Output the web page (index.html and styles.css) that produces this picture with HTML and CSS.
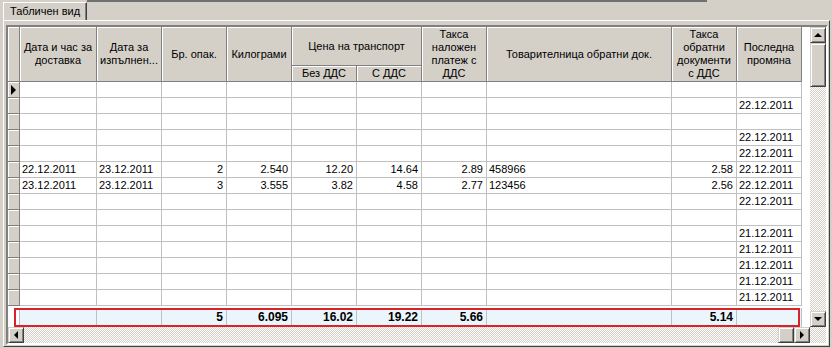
FILE: index.html
```html
<!DOCTYPE html>
<html>
<head>
<meta charset="utf-8">
<link rel="stylesheet" href="styles.css">
</head>
<body>
<div class="tabs">
  <div class="tab">Табличен вид</div>
  <div class="tabline"></div>
</div>
<div class="page">
  <div class="frame">
    <div class="data">
      <div class="grid">
        <div class="h hs2"></div>
        <div class="h hs2">Дата и час за<br>доставка</div>
        <div class="h hs2">Дата за<br>изпълнен...</div>
        <div class="h hs2">Бр. опак.</div>
        <div class="h hs2">Килограми</div>
        <div class="h hc2">Цена на транспорт</div>
        <div class="h hs2">Такса<br>наложен<br>платеж с<br>ДДС</div>
        <div class="h hs2">Товарителница обратни док.</div>
        <div class="h hs2">Такса<br>обратни<br>документи<br>с ДДС</div>
        <div class="h hs2">Последна<br>промяна</div>
        <div class="h">Без ДДС</div>
        <div class="h">С ДДС</div>

        <div class="ind"><span class="arrow"></span></div><div class="c"></div><div class="c"></div><div class="c"></div><div class="c"></div><div class="c"></div><div class="c"></div><div class="c"></div><div class="c"></div><div class="c"></div><div class="c"></div>
        <div class="ind"></div><div class="c"></div><div class="c"></div><div class="c"></div><div class="c"></div><div class="c"></div><div class="c"></div><div class="c"></div><div class="c"></div><div class="c"></div><div class="c">22.12.2011</div>
        <div class="ind"></div><div class="c"></div><div class="c"></div><div class="c"></div><div class="c"></div><div class="c"></div><div class="c"></div><div class="c"></div><div class="c"></div><div class="c"></div><div class="c"></div>
        <div class="ind"></div><div class="c"></div><div class="c"></div><div class="c"></div><div class="c"></div><div class="c"></div><div class="c"></div><div class="c"></div><div class="c"></div><div class="c"></div><div class="c">22.12.2011</div>
        <div class="ind"></div><div class="c"></div><div class="c"></div><div class="c"></div><div class="c"></div><div class="c"></div><div class="c"></div><div class="c"></div><div class="c"></div><div class="c"></div><div class="c">22.12.2011</div>
        <div class="ind"></div><div class="c">22.12.2011</div><div class="c">23.12.2011</div><div class="c r">2</div><div class="c r">2.540</div><div class="c r">12.20</div><div class="c r">14.64</div><div class="c r">2.89</div><div class="c">458966</div><div class="c r">2.58</div><div class="c">22.12.2011</div>
        <div class="ind"></div><div class="c">23.12.2011</div><div class="c">23.12.2011</div><div class="c r">3</div><div class="c r">3.555</div><div class="c r">3.82</div><div class="c r">4.58</div><div class="c r">2.77</div><div class="c">123456</div><div class="c r">2.56</div><div class="c">22.12.2011</div>
        <div class="ind"></div><div class="c"></div><div class="c"></div><div class="c"></div><div class="c"></div><div class="c"></div><div class="c"></div><div class="c"></div><div class="c"></div><div class="c"></div><div class="c">22.12.2011</div>
        <div class="ind"></div><div class="c"></div><div class="c"></div><div class="c"></div><div class="c"></div><div class="c"></div><div class="c"></div><div class="c"></div><div class="c"></div><div class="c"></div><div class="c"></div>
        <div class="ind"></div><div class="c"></div><div class="c"></div><div class="c"></div><div class="c"></div><div class="c"></div><div class="c"></div><div class="c"></div><div class="c"></div><div class="c"></div><div class="c">21.12.2011</div>
        <div class="ind"></div><div class="c"></div><div class="c"></div><div class="c"></div><div class="c"></div><div class="c"></div><div class="c"></div><div class="c"></div><div class="c"></div><div class="c"></div><div class="c">21.12.2011</div>
        <div class="ind"></div><div class="c"></div><div class="c"></div><div class="c"></div><div class="c"></div><div class="c"></div><div class="c"></div><div class="c"></div><div class="c"></div><div class="c"></div><div class="c">21.12.2011</div>
        <div class="ind"></div><div class="c"></div><div class="c"></div><div class="c"></div><div class="c"></div><div class="c"></div><div class="c"></div><div class="c"></div><div class="c"></div><div class="c"></div><div class="c">21.12.2011</div>
        <div class="ind"></div><div class="c"></div><div class="c"></div><div class="c"></div><div class="c"></div><div class="c"></div><div class="c"></div><div class="c"></div><div class="c"></div><div class="c"></div><div class="c">21.12.2011</div>

        <div class="f f0"></div><div class="f"></div><div class="f"></div><div class="f r">5</div><div class="f r">6.095</div><div class="f r">16.02</div><div class="f r">19.22</div><div class="f r">5.66</div><div class="f"></div><div class="f r">5.14</div><div class="f"></div>
      </div>
      <div class="highlight"></div>
    </div>
    <div class="vscroll">
      <div class="btn"><span class="tri up"></span></div>
      <div class="btn thumb-v"></div>
      <div class="track"></div>
      <div class="btn"><span class="tri down"></span></div>
    </div>
    <div class="hscroll">
      <div class="btn"><span class="tri left"></span></div>
      <div class="track"></div>
      <div class="btn"></div>
      <div class="btn"><span class="tri right"></span></div>
    </div>
    <div class="corner"></div>
  </div>
</div>
</body>
</html>
```
FILE: styles.css
```css
html, body {
  margin: 0;
  padding: 0;
}
body {
  width: 832px;
  height: 348px;
  overflow: hidden;
  background: #d4d0c8;
  font-family: "Liberation Sans", Arial, sans-serif;
  font-size: 11px;
  color: #000;
}
.tabs {
  display: flex;
  align-items: flex-start;
  height: 20px;
}
.tab {
  margin-left: 3px;
  margin-top: 2px;
  width: 84px;
  height: 18px;
  box-sizing: border-box;
  border-top: 1px solid #fff;
  border-left: 1px solid #fff;
  border-right: 1px solid #404040;
  box-shadow: inset -1px 0 #808080;
  padding-left: 6px;
  line-height: 17px;
  white-space: nowrap;
}
.tabline {
  width: 620px;
  height: 2px;
  background: #707070;
}
.page {
  margin-left: 3px;
  width: 827px;
  height: 327px;
  box-sizing: border-box;
  border-top: 1px solid #fff;
  border-left: 1px solid #fff;
  border-right: 1px solid #404040;
  border-bottom: 1px solid #404040;
  padding: 4px 0 0 2px;
}
.frame {
  width: 822px;
  height: 320px;
  box-sizing: border-box;
  border-style: solid;
  border-width: 2px;
  border-color: #808080 #fff #fff #808080;
  box-shadow: inset 1px 1px #404040;
  display: grid;
  grid-template-columns: 802px 16px;
  grid-template-rows: 300px 16px;
}
.data {
  position: relative;
  background: #fff;
  overflow: hidden;
}
.grid {
  display: grid;
  grid-template-columns: 12px 77px 65px 65px 65px 65px 65px 65px 185px 65px 65px;
  grid-template-rows: 39px 16px repeat(14, 16px) 21px;
}
.h {
  background: #d4d0c8;
  border-right: 1px solid #808080;
  border-bottom: 1px solid #808080;
  box-shadow: inset 1px 1px #fff;
  box-sizing: border-box;
  display: flex;
  align-items: center;
  justify-content: center;
  text-align: center;
  line-height: 13px;
  white-space: nowrap;
  overflow: hidden;
}
.hs2 { grid-row: span 2; }
.hc2 { grid-column: span 2; }
.ind {
  background: #d4d0c8;
  border-right: 1px solid #808080;
  border-bottom: 1px solid #808080;
  box-shadow: inset 1px 1px #fff;
  box-sizing: border-box;
  display: flex;
  align-items: center;
  padding-left: 3px;
}
.arrow {
  width: 0;
  height: 0;
  border-left: 5px solid #000;
  border-top: 5px solid transparent;
  border-bottom: 5px solid transparent;
}
.c {
  border-right: 1px solid #c0c0c0;
  border-bottom: 1px solid #c0c0c0;
  box-sizing: border-box;
  padding: 0 3px 0 2px;
  line-height: 15px;
  white-space: nowrap;
  overflow: hidden;
}
.r { text-align: right; }
.f {
  margin-top: 2px;
  height: 19px;
  background: #eaf6fb;
  border-right: 1px solid #c0c0c0;
  box-sizing: border-box;
  padding: 0 3px 0 2px;
  line-height: 19px;
  font-weight: bold;
  font-size: 12px;
  white-space: nowrap;
}
.f0 { background: #fff; }
.highlight {
  position: absolute;
  left: 6px;
  top: 281px;
  width: 786px;
  height: 19px;
  box-sizing: border-box;
  border: 2px solid #d8232a;
}
.vscroll {
  display: flex;
  flex-direction: column;
}
.hscroll {
  display: flex;
}
.track {
  flex: 1;
  background: repeating-conic-gradient(#fff 0 25%, #d4d0c8 0 50%) 0 0 / 2px 2px;
}
.corner {
  background: repeating-conic-gradient(#fff 0 25%, #d4d0c8 0 50%) 0 0 / 2px 2px;
}
.btn {
  width: 16px;
  height: 16px;
  flex: none;
  box-sizing: border-box;
  background: #d4d0c8;
  border: 1px solid;
  border-color: #d4d0c8 #404040 #404040 #d4d0c8;
  box-shadow: inset 1px 1px #fff, inset -1px -1px #808080;
  display: flex;
  align-items: center;
  justify-content: center;
}
.thumb-v { height: 44px; }
.tri {
  width: 0;
  height: 0;
}
.tri.up {
  border-left: 4px solid transparent;
  border-right: 4px solid transparent;
  border-bottom: 4px solid #000;
}
.tri.down {
  border-left: 4px solid transparent;
  border-right: 4px solid transparent;
  border-top: 4px solid #000;
}
.tri.left {
  border-top: 4px solid transparent;
  border-bottom: 4px solid transparent;
  border-right: 4px solid #000;
}
.tri.right {
  border-top: 4px solid transparent;
  border-bottom: 4px solid transparent;
  border-left: 4px solid #000;
}
```
